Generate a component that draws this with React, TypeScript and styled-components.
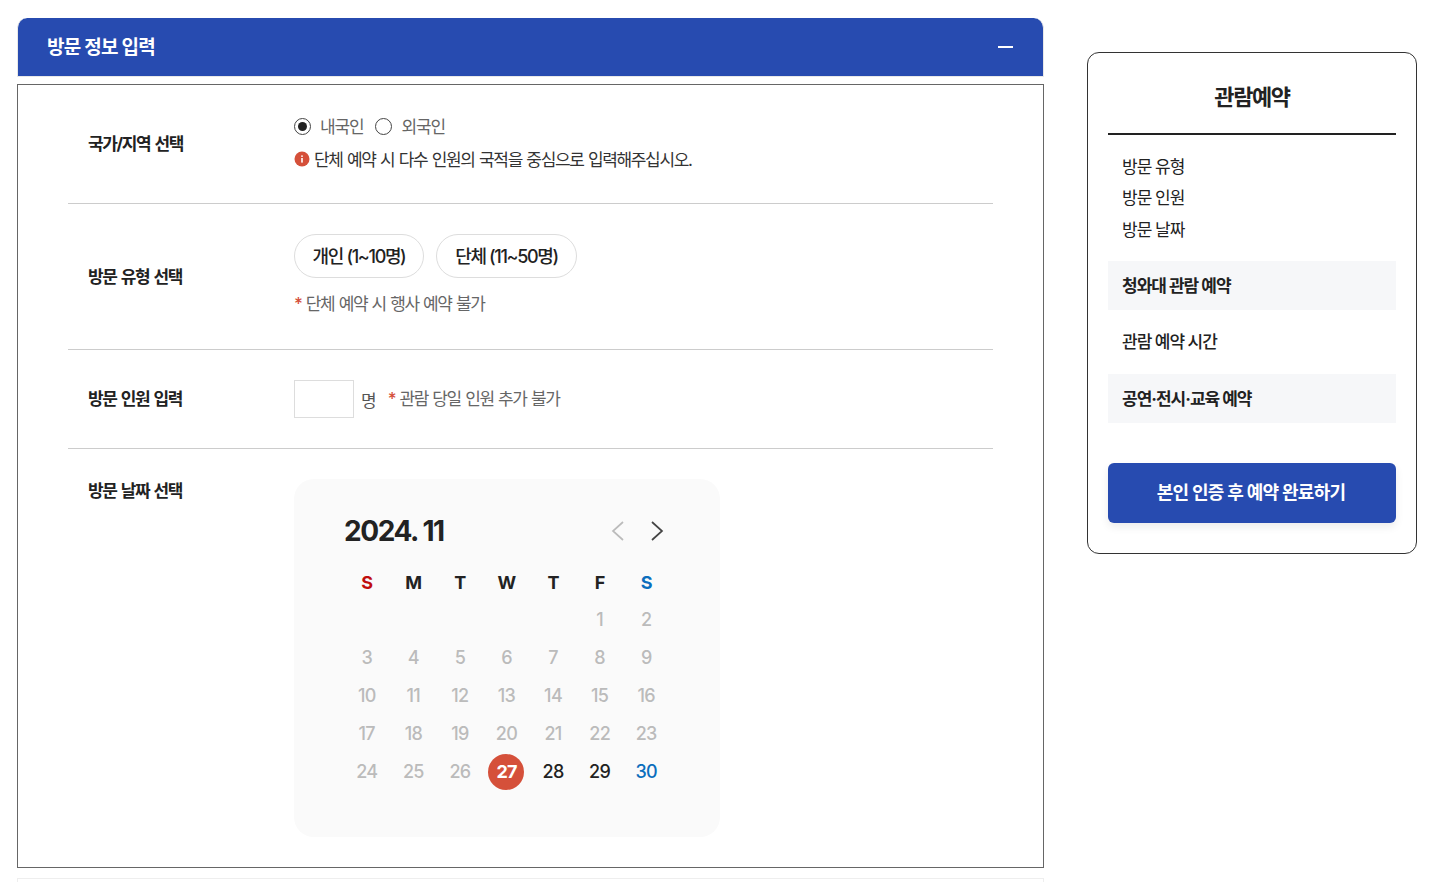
import styled, { createGlobalStyle } from "styled-components";

const GlobalStyle = createGlobalStyle`
    html, body {
        margin: 0;
        padding: 0;
        background: #fff;
        height: 882px;
        overflow: hidden;
    }
    body {
        font-family: Inter, "Noto Sans CJK KR", sans-serif;
        color: #222;
    }
    * { box-sizing: border-box; }
`;

const Page = styled.div`
    display: flex;
    align-items: flex-start;
    padding: 18px 18px 0 17px;
    gap: 43px;
`;
const Main = styled.main`
    width: 1027px;
    flex: none;
`;
const Head = styled.div`
    height: 59px;
    background: #274bb0;
    border: 1px solid #e8e8e8;
    border-top: 0;
    border-radius: 10px 10px 0 0;
    color: #fff;
    display: flex;
    align-items: center;
    justify-content: space-between;
    padding: 0 30px 1px 29px;
`;
const HeadTitle = styled.span`
    margin-bottom: 3px;
    font-size: 19px;
    font-weight: 700;
    letter-spacing: -0.75px;
`;
const Minus = styled.span`
    width: 15px;
    height: 2px;
    background: #fff;
`;
const Panel = styled.section`
    margin-top: 7px;
    height: 784px;
    border: 1px solid #666;
    padding: 0 50px;
`;
const NextPanel = styled.div`
    margin-top: 10px;
    height: 40px;
    border: 1px solid #eee;
`;
const Row = styled.div<{ $h: number; $top?: boolean; $pb?: number }>`
    height: ${(p) => p.$h}px;
    display: flex;
    align-items: ${(p) => (p.$top ? "flex-start" : "center")};
    border-bottom: 1px solid #ccc;
    padding-left: 19px;
    padding-bottom: ${(p) => p.$pb ?? 0}px;
    &:last-child { border-bottom: 0; }
`;
const Label = styled.div<{ $pt?: number; $pb?: number }>`
    width: 207px;
    flex: none;
    padding-left: 1px;
    font-size: 17px;
    font-weight: 700;
    letter-spacing: -1.35px;
    word-spacing: 1.5px;
    padding-top: ${(p) => p.$pt ?? 0}px;
    padding-bottom: ${(p) => p.$pb ?? 0}px;
`;
const Stack = styled.div<{ $pt?: number }>`
    display: flex;
    flex-direction: column;
    padding-top: ${(p) => p.$pt ?? 0}px;
`;
const Radios = styled.div`
    display: flex;
    align-items: center;
    height: 24px;
    font-size: 17px;
    letter-spacing: -1.15px;
    color: #666;
`;
const Radio = styled.span<{ $on?: boolean }>`
    width: 17px;
    height: 17px;
    margin-top: 1px;
    border: 1px solid #444;
    border-radius: 50%;
    margin-right: 9px;
    margin-left: ${(p) => (p.$on ? 0 : 12)}px;
    display: flex;
    align-items: center;
    justify-content: center;
    &::after {
        content: "";
        width: 9px;
        height: 9px;
        border-radius: 50%;
        background: ${(p) => (p.$on ? "#222" : "transparent")};
    }
`;
const Warn = styled.div`
    display: flex;
    align-items: center;
    gap: 4px;
    margin-top: 9px;
    height: 24px;
    font-size: 17px;
    letter-spacing: -1.35px;
    word-spacing: 1px;
    color: #333;
`;
const Pills = styled.div`
    display: flex;
    gap: 12px;
`;
const Pill = styled.button<{ $wide?: boolean }>`
    height: 44px;
    width: ${(p) => (p.$wide ? 141 : 130)}px;
    padding: 0 0 2px;
    background: #fff;
    border: 1px solid #ddd;
    border-radius: 22px;
    font: inherit;
    font-size: 18px;
    font-weight: 500;
    letter-spacing: -1.35px;
    color: #222;
`;
const Note = styled.div<{ $mt?: number; $ml?: number }>`
    margin-top: ${(p) => p.$mt ?? 0}px;
    margin-left: ${(p) => p.$ml ?? 0}px;
    height: 24px;
    line-height: 24px;
    font-size: 17px;
    letter-spacing: -1.4px;
    word-spacing: 1px;
    color: #666;
    b {
        color: #d5503a;
        font-weight: 500;
    }
`;
const CountRow = styled.div`
    display: flex;
    align-items: center;
`;
const CountInput = styled.div`
    width: 60px;
    height: 38px;
    border: 1px solid #ddd;
`;
const Unit = styled.span`
    margin-left: 7px;
    font-size: 17px;
    color: #555;
`;
const Calendar = styled.div`
    width: 426px;
    height: 358px;
    background: #fafafa;
    border-radius: 20px;
    padding: 32px 50px 0;
`;
const CalHead = styled.div`
    display: flex;
    align-items: center;
    justify-content: space-between;
    height: 40px;
    padding-right: 3px;
`;
const CalTitle = styled.div`
    font-size: 28px;
    font-weight: 700;
    letter-spacing: -1.4px;
    color: #222;
`;
const Arrows = styled.div`
    display: flex;
    gap: 19px;
`;
const Grid = styled.div`
    display: grid;
    grid-template-columns: repeat(7, 1fr);
    grid-auto-rows: 38px;
    margin-top: 12px;
`;
const WeekCell = styled.div<{ $c: string }>`
    display: flex;
    align-items: center;
    justify-content: center;
    padding-right: 1px;
    font-size: 18px;
    font-weight: 700;
    letter-spacing: -0.7px;
    color: ${(p) => p.$c};
`;
const DayCell = styled(WeekCell)`
    padding-bottom: 2px;
    font-weight: 500;
`;
const Today = styled.span`
    width: 36px;
    height: 36px;
    margin-bottom: -2px;
    padding-bottom: 2px;
    border-radius: 50%;
    display: flex;
    align-items: center;
    justify-content: center;
    background: #d5503a;
    color: #fff;
    font-weight: 700;
    letter-spacing: -1px;
`;
const Side = styled.aside`
    width: 330px;
    height: 502px;
    flex: none;
    margin-top: 34px;
    border: 1px solid #333;
    border-radius: 12px;
    padding: 0 20px;
`;
const SideTitle = styled.h2`
    margin: 0;
    height: 82px;
    border-bottom: 2px solid #222;
    display: flex;
    align-items: center;
    justify-content: center;
    padding-top: 3px;
    font-size: 22px;
    font-weight: 700;
    letter-spacing: -1.4px;
    color: #222;
`;
const SideList = styled.ul`
    list-style: none;
    margin: 0;
    padding: 16.5px 14px 14.5px;
`;
const SideItem = styled.li`
    height: 31.5px;
    line-height: 31px;
    font-size: 17px;
    letter-spacing: -1px;
    color: #222;
`;
const Band = styled.div<{ $gray?: boolean }>`
    height: ${(p) => (p.$gray ? 49 : 64)}px;
    display: flex;
    align-items: center;
    padding: 0 14px 2px;
    background: ${(p) => (p.$gray ? "#f6f7f9" : "transparent")};
    font-size: 17px;
    font-weight: ${(p) => (p.$gray ? 700 : 500)};
    letter-spacing: -1px;
    color: #222;
`;
const Submit = styled.button`
    width: 100%;
    height: 60px;
    margin-top: 40px;
    padding: 0 2px 4px 0;
    background: #274bb0;
    color: #fff;
    border: 0;
    border-radius: 6px;
    box-shadow: 0 4px 8px rgba(0, 0, 0, 0.08);
    font: inherit;
    font-size: 18px;
    font-weight: 700;
    letter-spacing: -0.7px;
`;

const week = ["S", "M", "T", "W", "T", "F", "S"];
const weekColor = (i: number) => (i === 0 ? "#c00d0d" : i === 6 ? "#0b6ebd" : "#222");
const days: (number | null)[] = [null, null, null, null, null, ...Array.from({ length: 30 }, (_, i) => i + 1)];

const dayColor = (d: number) => {
    if (d < 27) return "#bbb";
    if (d === 30) return "#0b6ebd";
    return "#222";
};

function Chevron({ left, color }: { left?: boolean; color: string }) {
    return (
        <svg width="20" height="24" viewBox="0 0 20 24" fill="none">
            <path d={left ? "M15 3 L5 12 L15 21" : "M5 3 L15 12 L5 21"} stroke={color} strokeWidth="1.7" />
        </svg>
    );
}

function InfoIcon() {
    return (
        <svg width="16" height="16" viewBox="0 0 16 16">
            <circle cx="8" cy="8" r="7.5" fill="#d5503a" />
            <rect x="7.2" y="7" width="1.6" height="4.6" fill="#fff" />
            <rect x="7.2" y="4.4" width="1.6" height="1.5" fill="#fff" />
        </svg>
    );
}

export default function App() {
    return (
        <>
            <GlobalStyle />
            <Page>
                <Main>
                    <Head>
                        <HeadTitle>방문 정보 입력</HeadTitle>
                        <Minus />
                    </Head>
                    <Panel>
                        <Row $h={119} $pb={4}>
                            <Label>국가/지역 선택</Label>
                            <Stack>
                                <Radios>
                                    <Radio $on />
                                    내국인
                                    <Radio />
                                    외국인
                                </Radios>
                                <Warn>
                                    <InfoIcon />
                                    단체 예약 시 다수 인원의 국적을 중심으로 입력해주십시오.
                                </Warn>
                            </Stack>
                        </Row>
                        <Row $h={146} $pb={4}>
                            <Label $pt={2}>방문 유형 선택</Label>
                            <Stack>
                                <Pills>
                                    <Pill>개인 (1~10명)</Pill>
                                    <Pill $wide>단체 (11~50명)</Pill>
                                </Pills>
                                <Note $mt={14}>
                                    <b>*</b> 단체 예약 시 행사 예약 불가
                                </Note>
                            </Stack>
                        </Row>
                        <Row $h={99}>
                            <Label $pb={4}>방문 인원 입력</Label>
                            <CountRow>
                                <CountInput />
                                <Unit>명</Unit>
                                <Note $ml={11}>
                                    <b>*</b> 관람 당일 인원 추가 불가
                                </Note>
                            </CountRow>
                        </Row>
                        <Row $h={418} $top>
                            <Label $pt={28}>방문 날짜 선택</Label>
                            <Stack $pt={30}>
                                <Calendar>
                                    <CalHead>
                                        <CalTitle>2024. 11</CalTitle>
                                        <Arrows>
                                            <Chevron left color="#bbb" />
                                            <Chevron color="#444" />
                                        </Arrows>
                                    </CalHead>
                                    <Grid>
                                        {week.map((w, i) => (
                                            <WeekCell key={i} $c={weekColor(i)}>
                                                {w}
                                            </WeekCell>
                                        ))}
                                        {days.map((d, i) =>
                                            d === null ? (
                                                <DayCell key={i} $c="#bbb" />
                                            ) : (
                                                <DayCell key={i} $c={dayColor(d)}>
                                                    {d === 27 ? <Today>{d}</Today> : d}
                                                </DayCell>
                                            )
                                        )}
                                    </Grid>
                                </Calendar>
                            </Stack>
                        </Row>
                    </Panel>
                    <NextPanel />
                </Main>
                <Side>
                    <SideTitle>관람예약</SideTitle>
                    <SideList>
                        <SideItem>방문 유형</SideItem>
                        <SideItem>방문 인원</SideItem>
                        <SideItem>방문 날짜</SideItem>
                    </SideList>
                    <Band $gray>청와대 관람 예약</Band>
                    <Band>관람 예약 시간</Band>
                    <Band $gray>공연·전시·교육 예약</Band>
                    <Submit>본인 인증 후 예약 완료하기</Submit>
                </Side>
            </Page>
        </>
    );
}
